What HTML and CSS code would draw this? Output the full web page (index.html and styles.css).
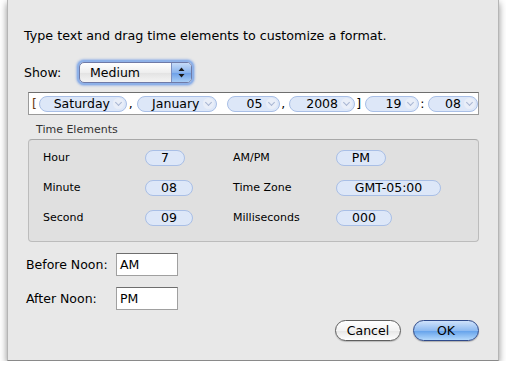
FILE: index.html
```html
<!DOCTYPE html>
<html lang="en">
<head>
    <meta charset="UTF-8">
    <title>Date Format</title>
    <link rel="stylesheet" href="styles.css">
</head>
<body>
    <div class="sheet">
        <!-- Intro -->
        <div class="intro">Type text and drag time elements to customize a format.</div>

        <!-- Show popup -->
        <div class="show-row">
            <span class="show-label">Show:</span>
            <div class="popup">
                <span class="popup-text">Medium</span>
                <span class="popup-arrows">
                    <svg width="7" height="11" viewBox="0 0 7 11"><path d="M3.5 0.5 L6.5 4 H0.5 Z M0.5 7 H6.5 L3.5 10.5 Z" fill="#1a1a1a"/></svg>
                </span>
            </div>
        </div>

        <!-- Token field -->
        <div class="token-field">
            <span class="sep">[</span>
            <span class="token w88">Saturday<i class="chev"></i></span>
            <span class="sep">,</span>
            <span class="token w80">January<i class="chev"></i></span>
            <span class="token w53 gap">05<i class="chev"></i></span>
            <span class="sep">,</span>
            <span class="token w66">2008<i class="chev"></i></span>
            <span class="sep">]</span>
            <span class="token w54">19<i class="chev"></i></span>
            <span class="sep">:</span>
            <span class="token w50">08<i class="chev"></i></span>
        </div>

        <!-- Time elements -->
        <div class="group-label">Time Elements</div>
        <div class="group-box">
            <span class="el-label">Hour</span>
            <span class="el-token"><span class="pill" style="width: 40px">7</span></span>
            <span class="el-label">AM/PM</span>
            <span class="el-token"><span class="pill" style="width: 50px">PM</span></span>

            <span class="el-label">Minute</span>
            <span class="el-token"><span class="pill" style="width: 48px">08</span></span>
            <span class="el-label">Time Zone</span>
            <span class="el-token"><span class="pill" style="width: 105px">GMT-05:00</span></span>

            <span class="el-label">Second</span>
            <span class="el-token"><span class="pill" style="width: 48px">09</span></span>
            <span class="el-label">Milliseconds</span>
            <span class="el-token"><span class="pill" style="width: 56px">000</span></span>
        </div>

        <!-- Noon fields -->
        <div class="noon-row">
            <span class="noon-label">Before Noon:</span>
            <div class="text-input">AM</div>
        </div>
        <div class="noon-row">
            <span class="noon-label">After Noon:</span>
            <div class="text-input">PM</div>
        </div>

        <!-- Buttons -->
        <div class="button-row">
            <button class="btn cancel-btn">Cancel</button>
            <button class="btn ok-btn">OK</button>
        </div>
    </div>
</body>
</html>
```

FILE: styles.css
```css
/* Page and sheet */
body {
    margin: 0;
    background-color: #ffffff;
    font-family: 'DejaVu Sans', 'Liberation Sans', sans-serif;
    font-size: 12px;
    color: #000;
}

.sheet {
    margin-left: 7px;
    width: 492px;
    height: 361px;
    box-sizing: border-box;
    background-color: #e8e8e8;
    border-left: 1px solid #b5b5b5;
    border-right: 1px solid #b5b5b5;
    border-bottom: 1px solid #8a8a8a;
    box-shadow: 0 3px 7px rgba(0, 0, 0, 0.45);
    padding: 28px 0 0 16px;
}

.intro {
    height: 16px;
    line-height: 16px;
    font-size: 12.7px;
}

/* Show popup */
.show-row {
    margin-top: 18px;
    display: flex;
    align-items: center;
}

.show-label {
    width: 55px;
    font-size: 12.5px;
}

.popup {
    width: 111px;
    height: 19px;
    display: flex;
    border: 1px solid #6f7aa6;
    border-radius: 5px;
    background: linear-gradient(#ffffff, #eeeeee 50%, #e2e2e2 51%, #f4f4f4);
    box-shadow: 0 0 0 2px #8eb1e8, 0 0 2px 3px rgba(120, 160, 230, 0.6);
    overflow: hidden;
}

.popup-text {
    flex: 1;
    padding-left: 10px;
    line-height: 19px;
    font-size: 12.5px;
}

.popup-arrows {
    width: 19px;
    display: flex;
    align-items: center;
    justify-content: center;
    border-left: 1px solid #7d8fc0;
    background: linear-gradient(#c6dbf8, #8ab4ee 50%, #6a9ee8 51%, #a8cdf6);
}

/* Token field */
.token-field {
    margin-top: 9px;
    margin-left: 4px;
    width: 451px;
    height: 23px;
    box-sizing: border-box;
    background-color: #ffffff;
    border: 1px solid #9a9a9a;
    border-top-color: #6e6e6e;
    display: flex;
    align-items: center;
    padding-left: 3px;
    overflow: hidden;
    white-space: nowrap;
    font-size: 12.5px;
}

.sep {
    width: 9px;
    text-align: center;
    color: #000;
}

.sep:first-child {
    color: #6b3a12;
    width: 6px;
    text-align: left;
}

.token {
    height: 16px;
    line-height: 16px;
    box-sizing: border-box;
    flex-shrink: 0;
    border: 1px solid #a9bfe6;
    border-radius: 8px;
    background-color: #dde7f8;
    display: flex;
    align-items: center;
    justify-content: flex-end;
    padding-right: 2px;
    margin-left: 2px;
}

.token.gap {
    margin-left: 10px;
}

.w88 { width: 88px; }
.w80 { width: 80px; }
.w53 { width: 53px; }
.w66 { width: 66px; }
.w54 { width: 54px; }
.w50 { width: 50px; }

.chev {
    width: 11px;
    height: 11px;
    margin-left: 3px;
    border-radius: 50%;
    background-color: #e9eef8;
    position: relative;
}

.chev::after {
    content: "";
    position: absolute;
    left: 3px;
    top: 2px;
    width: 4px;
    height: 4px;
    border-right: 1px solid #a8b6d2;
    border-bottom: 1px solid #a8b6d2;
    transform: rotate(45deg);
}

/* Time elements box */
.group-label {
    margin-top: 8px;
    margin-left: 12px;
    height: 14px;
    line-height: 14px;
    font-size: 11px;
    color: #333;
}

.group-box {
    margin-top: 2px;
    margin-left: 4px;
    width: 451px;
    height: 103px;
    box-sizing: border-box;
    background-color: #e0e0e0;
    border: 1px solid #bcbcbc;
    border-top-color: #a8a8a8;
    border-radius: 4px;
    padding: 10px 0 0 14px;
    display: grid;
    grid-template-columns: 102px 88px 103px 1fr;
    grid-auto-rows: 30px;
    align-items: start;
    font-size: 11px;
}

.el-label {
    line-height: 16px;
}

.pill {
    display: block;
    height: 16px;
    line-height: 14px;
    box-sizing: border-box;
    border: 1px solid #a9bfe6;
    border-radius: 8px;
    background-color: #dde7f8;
    text-align: center;
    font-size: 12.5px;
}

/* Noon fields */
.noon-row {
    display: flex;
    align-items: center;
    margin-top: 11px;
    margin-left: 2px;
    font-size: 12.5px;
}

.noon-label {
    width: 90px;
}

.text-input {
    width: 62px;
    height: 23px;
    box-sizing: border-box;
    background-color: #ffffff;
    border: 1px solid #a0a0a0;
    border-top-color: #6e6e6e;
    line-height: 21px;
    padding-left: 3px;
}

/* Buttons */
.button-row {
    margin-top: 10px;
    margin-right: 19px;
    display: flex;
    justify-content: flex-end;
    gap: 12px;
}

.btn {
    width: 66px;
    height: 21px;
    border-radius: 11px;
    font-family: inherit;
    font-size: 12.5px;
    padding: 0;
    line-height: 19px;
    color: #000;
}

.cancel-btn {
    border: 1px solid #5e5e5e;
    background: linear-gradient(#ffffff, #f3f3f3 50%, #e6e6e6 51%, #ffffff);
    box-shadow: 0 1px 1px rgba(0, 0, 0, 0.2);
}

.ok-btn {
    border: 1px solid #2f4a8a;
    background: linear-gradient(#cfe2fb, #8fbbf1 50%, #62a0ea 51%, #b3d8fb);
    box-shadow: 0 1px 1px rgba(0, 0, 0, 0.25);
}
```
